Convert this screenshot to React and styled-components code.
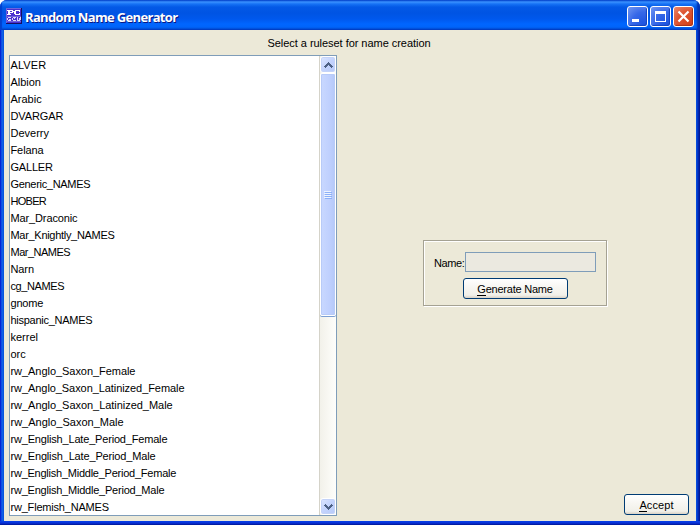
import React from "react";
import styled, { createGlobalStyle } from "styled-components";

const GlobalStyle = createGlobalStyle`
  * { box-sizing: border-box; }
  body { margin: 0; background: #fff; overflow: hidden; }
`;

const Window = styled.main`
  width: 700px;
  height: 525px;
  display: flex;
  flex-direction: column;
  border-radius: 7px 7px 0 0;
  overflow: hidden;
  background: #0831d9;
  font: 11px/17px "Liberation Sans", Arial, sans-serif;
  color: #000;
  cursor: default;
`;

const TitleBar = styled.header`
  height: 30px;
  flex: none;
  display: flex;
  align-items: center;
  padding: 2px 6px 0 6px;
  background: linear-gradient(180deg, #0850d8 0, #3a91ff 2px, #1672f5 4px, #0359e6 7px, #0054e3 13px, #0058ed 19px, #0066ff 24px, #0064fa 27px, #004fd8 29px, #003dc0 30px);
  box-shadow: inset 2px 0 1px #0040cf, inset -3px 0 2px #0030b0;
`;

const AppIcon = styled.svg`
  display: block;
  width: 16px;
  height: 16px;
  margin-right: 3px;
`;

const Title = styled.h1`
  flex: 1;
  margin: 0;
  padding-top: 2px;
  font: bold 13px/18px "Open Sans", "Noto Sans", sans-serif;
  letter-spacing: -0.66px;
  color: #fff;
  text-shadow: 1px 1px 0 #0a1883;
  white-space: nowrap;
`;

const Controls = styled.div`
  display: flex;
  gap: 2px;
`;

const ControlButton = styled.button`
  width: 21px;
  height: 21px;
  padding: 0;
  border: 1px solid #fff;
  border-radius: 3px;
  background: ${(p) =>
    p.$close
      ? "radial-gradient(circle at 80% 85%, #d7441b 0, #dd5533 55%, #ee9b80 115%)"
      : "radial-gradient(circle at 80% 85%, #1f55e0 0, #3768e8 50%, #83a5f5 115%)"};
  box-shadow: inset -1px -1px 1px ${(p) => (p.$close ? "#a83418" : "#1543bd")};
  svg { display: block; }
`;

const Body = styled.div`
  flex: 1;
  min-height: 0;
  display: flex;
  padding: 0 4px 4px;
  background:
    linear-gradient(180deg, #0842e8, #0831d9 50%, #001590) bottom / 100% 4px no-repeat,
    linear-gradient(90deg, #0019cf, #0831d9 25%, #166aee 50%, #0855dd 75%) left / 4px 100% no-repeat,
    linear-gradient(90deg, #0855dd, #0441d8 25%, #001da0 75%, #00138c) right / 4px 100% no-repeat;
`;

const Content = styled.div`
  flex: 1;
  display: flex;
  flex-direction: column;
  padding: 5px 7px 5px 5px;
  background: #ece9d8;
`;

const Prompt = styled.div`
  height: 20px;
  text-align: center;
  line-height: 17px;
  letter-spacing: -0.04px;
`;

const Columns = styled.div`
  flex: 1;
  min-height: 0;
  display: flex;
`;

const ListBox = styled.div`
  width: 328px;
  height: 461px;
  display: flex;
  border: 1px solid #7f9db9;
  background: #fff;
`;

const List = styled.ul`
  flex: 1;
  margin: 0;
  padding: 0 0 0 0.5px;
  list-style: none;
  overflow: hidden;
`;

const Item = styled.li`
  height: 17px;
  white-space: nowrap;
  line-height: 18px;
  letter-spacing: ${(p) => p.$spacing}px;
`;

const ScrollBar = styled.div`
  width: 17px;
  display: flex;
  flex-direction: column;
  border-left: 1px solid #d5d3c9;
  background: linear-gradient(90deg, #f2f1ea, #fefefb);
`;

const ScrollButton = styled.button`
  height: 17px;
  flex: none;
  display: grid;
  place-items: center;
  padding: 0;
  border: 1px solid #fff;
  border-radius: 3px;
  background: linear-gradient(135deg, #dce6ff, #c3d3fd 50%, #b7caf8);
  box-shadow: inset 0 0 0 1px #c4d3f8;
`;

const Thumb = styled.div`
  height: 243px;
  display: grid;
  place-items: center;
  border: 1px solid #fff;
  border-radius: 2px;
  background: linear-gradient(90deg, #c9d8ff, #bfd0fe 60%, #b4c8f8);
  box-shadow: inset 0 0 0 1px #b8cbf8, 0 1px 0 #7c9fd3;
`;

const Track = styled.div`
  flex: 1;
`;

const Side = styled.section`
  flex: 1;
  display: flex;
  flex-direction: column;
  align-items: flex-end;
  justify-content: space-between;
  padding: 185px 0 1px;
`;

const Group = styled.div`
  width: 184px;
  height: 66px;
  margin-right: 82px;
  display: flex;
  flex-direction: column;
  align-items: center;
  gap: 6px;
  padding-top: 11px;
  border: 1px solid #a5a293;
  box-shadow: inset 1px 1px 0 #fff, 1px 1px 0 #fff;
`;

const Field = styled.label`
  width: 162px;
  height: 20px;
  display: flex;
  gap: 1px;
  line-height: 23px;
`;

const FieldLabel = styled.span`
  width: 30px;
  letter-spacing: -0.4px;
`;

const Input = styled.input`
  width: 131px;
  height: 20px;
  padding: 0 2px;
  border: 1px solid #7f9db9;
  background: #ebe9e0;
  outline: 0;
`;

const PushButton = styled.button`
  width: ${(p) => p.$width}px;
  height: 21px;
  padding: 1px 0 0;
  border: 1px solid #003c74;
  border-radius: 3px;
  background: linear-gradient(180deg, #fff, #f8f7f3 40%, #f1f0e9 85%, #d9d1c5);
  font: 11px/18px "Liberation Sans", Arial, sans-serif;
  letter-spacing: ${(p) => p.$spacing || 0}px;
  color: #000;
`;

const Mnemonic = styled.span`
  display: inline-block;
  height: 13px;
  line-height: 13px;
  border-bottom: 1px solid #000;
  vertical-align: baseline;
`;

const names = [
  { name: "ALVER", spacing: 0.1 },
  { name: "Albion", spacing: -0.05 },
  { name: "Arabic", spacing: 0 },
  { name: "DVARGAR", spacing: -0.1 },
  { name: "Deverry", spacing: 0 },
  { name: "Felana", spacing: -0.1 },
  { name: "GALLER", spacing: -0.2 },
  { name: "Generic_NAMES", spacing: -0.31 },
  { name: "HOBER", spacing: -0.7 },
  { name: "Mar_Draconic", spacing: -0.13 },
  { name: "Mar_Knightly_NAMES", spacing: -0.3 },
  { name: "Mar_NAMES", spacing: -0.5 },
  { name: "Narn", spacing: -0.1 },
  { name: "cg_NAMES", spacing: -0.4 },
  { name: "gnome", spacing: -0.2 },
  { name: "hispanic_NAMES", spacing: -0.27 },
  { name: "kerrel", spacing: 0 },
  { name: "orc", spacing: 0 },
  { name: "rw_Anglo_Saxon_Female", spacing: -0.05 },
  { name: "rw_Anglo_Saxon_Latinized_Female", spacing: -0.07 },
  { name: "rw_Anglo_Saxon_Latinized_Male", spacing: -0.04 },
  { name: "rw_Anglo_Saxon_Male", spacing: 0 },
  { name: "rw_English_Late_Period_Female", spacing: -0.18 },
  { name: "rw_English_Late_Period_Male", spacing: -0.16 },
  { name: "rw_English_Middle_Period_Female", spacing: -0.24 },
  { name: "rw_English_Middle_Period_Male", spacing: -0.22 },
  { name: "rw_Flemish_NAMES", spacing: -0.2 },
];

const Chevron = ({ down }) => (
  <svg width="9" height="6" viewBox="0 0 9 6" shapeRendering="crispEdges">
    <path
      d="M4 0h1v1h-1zM3 1h3v1H3zM2 2h5v1H2zM1 3h3v1H1zM5 3h3v1H5zM0 4h3v1H0zM6 4h3v1H6zM1 5h1v1H1zM7 5h1v1H7z"
      fill="#4d6185"
      transform={down ? "rotate(180 4.5 3)" : undefined}
    />
  </svg>
);

const Logo = () => (
  <AppIcon viewBox="0 0 16 16" shapeRendering="crispEdges">
    <path fill="#4a2fd0" d="M0 0h16v16H0z" />
    <path fill="#6f63dc" d="M0 0h16v1H0zM0 0h1v16H0zM1 8h14v1H1zM1 13h14v1H1z" />
    <path fill="#171060" d="M15 0h1v16h-1zM0 15h16v1H0z" />
    <path
      fill="#fff"
      d="M1 2h6v1H1zM2 3h2v3H2zM1 6h4v1H1zM6 3h2v1H6zM4 4h3v1H4zM9 2h5v1H9zM8 3h2v3H8zM13 3h1v1h-1zM9 6h5v1H9zM13 5h1v1h-1z"
    />
    <path
      fill="#d9d6fb"
      d="M2 9h3v1H2zM1 10h1v2H1zM2 12h3v1H2zM3 11h2v1H3zM7 9h3v1H7zM6 10h1v2H6zM7 12h3v1H7zM8 10h1v1H8zM11 9h1v4h-1zM14 9h1v3h-1zM12 12h2v1h-2zM13 10h1v2h-1z"
    />
  </AppIcon>
);

export default function App() {
  return (
    <>
      <GlobalStyle />
      <Window>
        <TitleBar>
          <Logo />
          <Title>Random Name Generator</Title>
          <Controls>
            <ControlButton aria-label="Minimize">
              <svg width="19" height="19"><path fill="#fff" d="M4 12h7v3H4z" /></svg>
            </ControlButton>
            <ControlButton aria-label="Maximize">
              <svg width="19" height="19" shapeRendering="crispEdges">
                <path fill="#fff" fillRule="evenodd" d="M4 4h11v11H4zM5 7h9v7H5z" />
              </svg>
            </ControlButton>
            <ControlButton $close aria-label="Close">
              <svg width="19" height="19"><path d="M4.500 4.500l10 10M14.500 4.500l-10 10" stroke="#fff" strokeWidth="2.200" /></svg>
            </ControlButton>
          </Controls>
        </TitleBar>
        <Body>
          <Content>
            <Prompt>Select a ruleset for name creation</Prompt>
            <Columns>
              <ListBox>
                <List>
                  {names.map(({ name, spacing }) => (
                    <Item key={name} $spacing={spacing}>{name}</Item>
                  ))}
                </List>
                <ScrollBar>
                  <ScrollButton aria-label="Scroll up"><Chevron /></ScrollButton>
                  <Thumb>
                    <svg width="8" height="8" shapeRendering="crispEdges">
                      <path d="M0 .5h7M0 2.500h7M0 4.500h7M0 6.500h7" stroke="#eef4fe" />
                      <path d="M1 1.500h7M1 3.500h7M1 5.500h7M1 7.500h7" stroke="#8cb0f8" />
                    </svg>
                  </Thumb>
                  <Track />
                  <ScrollButton aria-label="Scroll down"><Chevron down /></ScrollButton>
                </ScrollBar>
              </ListBox>
              <Side>
                <Group>
                  <Field><FieldLabel>Name:</FieldLabel><Input readOnly /></Field>
                  <PushButton $width={105} $spacing={-0.22}><Mnemonic>G</Mnemonic>enerate Name</PushButton>
                </Group>
                <PushButton $width={65} $spacing={0.1}><Mnemonic>A</Mnemonic>ccept</PushButton>
              </Side>
            </Columns>
          </Content>
        </Body>
      </Window>
    </>
  );
}
